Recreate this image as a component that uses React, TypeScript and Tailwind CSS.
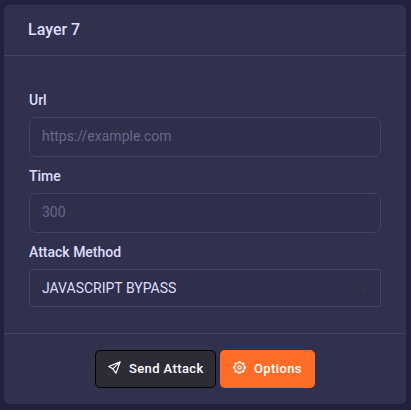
function SendIcon() {
  return (
    <svg className="mr-2 mb-[3px] h-[13px] w-[13px] overflow-visible" viewBox="0 0 13 13" fill="none" stroke="currentColor" strokeWidth="1.15" strokeLinejoin="round">
      <path d="M12.2 .9 .8 5.5 4.8 7.8 7.9 12.2ZM12.2 .9 4.8 7.8" />
    </svg>
  );
}

function GearIcon() {
  return (
    <svg className="mr-2 mb-[3px] h-[13px] w-[13px] overflow-visible" viewBox="0 0 13 13" fill="none" stroke="currentColor">
      <circle cx="6.5" cy="6.5" r="4.9" strokeWidth="1.2" />
      <circle cx="6.5" cy="6.5" r="1.7" strokeWidth="1.2" />
      <path
        d="M6.5 0v1.4M6.5 11.6V13M0 6.5h1.4M11.6 6.5H13M1.9 1.9l1.2 1.2M9.9 9.9l1.2 1.2M1.9 11.1l1.2-1.2M9.9 3.1l1.2-1.2"
        strokeWidth="2.1"
      />
    </svg>
  );
}

function Label({ children }: { children: string }) {
  return <label className="block pt-px text-[14px] leading-[21px] font-medium text-[#dedefd]">{children}</label>;
}

function Field({ label, placeholder }: { label: string; placeholder: string }) {
  return (
    <div>
      <Label>{label}</Label>
      <input
        placeholder={placeholder}
        className="mt-1.5 block h-10 w-full rounded-[7px] border border-[#45445f] bg-[#2f2e4b] px-3 pb-0.5 text-[14px] text-[#dedefd] outline-none placeholder:text-[#69688c] placeholder:opacity-100"
      />
    </div>
  );
}

export default function App() {
  return (
    <div className="h-[410px] w-[411px] bg-[#22213d] pt-[5px] pl-1 font-[Roboto,sans-serif]">
      <div className="flex h-[399px] w-[402px] flex-col rounded-[5px] bg-[#31304d]">
        <header className="h-[51px] border-b border-[#45445f] px-6 pt-[13px]">
          <h3 className="text-[16px] leading-6 font-medium text-[#dedefd]">Layer 7</h3>
        </header>
        <main className="flex flex-1 flex-col gap-2 px-[25px] pt-[33px]">
          <Field label="Url" placeholder="https://example.com" />
          <Field label="Time" placeholder="300" />
          <div>
            <Label>Attack Method</Label>
            <div className="mt-1.5 flex h-[38px] items-center justify-between rounded-[3px] border border-[#45445f] bg-[#2f2e4b] pr-3 pl-3 text-[14px] text-[#dedefd]">
              <span>JAVASCRIPT BYPASS</span>
              <svg className="h-2 w-2" viewBox="0 0 8 8" fill="none" stroke="#343a40" strokeWidth="1.5">
                <path d="M0.7 2.5 4 5.8 7.3 2.5" />
              </svg>
            </div>
          </div>
        </main>
        <footer className="flex h-[71px] justify-center gap-1 border-t border-[#45445f] pt-4 text-[13px] font-medium tracking-[0.39px] text-white">
          <button className="flex h-[38px] w-[121px] items-center rounded-[5px] border border-black bg-[#2d2b36] pl-3">
            <SendIcon />
            Send Attack
          </button>
          <button className="flex h-[38px] w-[95px] items-center rounded-[5px] bg-[#ff6d27] pl-[13px]">
            <GearIcon />
            Options
          </button>
        </footer>
      </div>
    </div>
  );
}
